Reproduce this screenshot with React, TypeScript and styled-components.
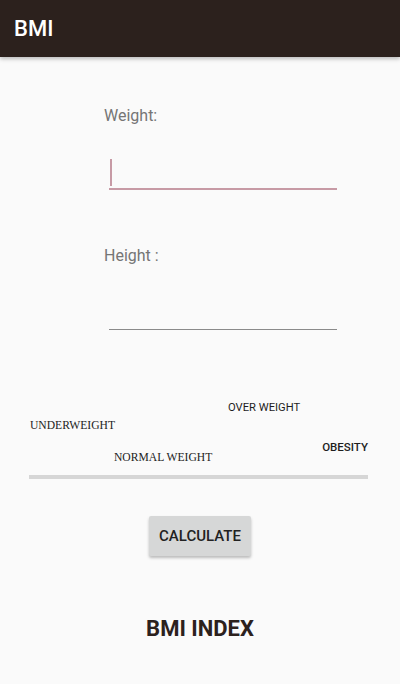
import React from "react";
import styled, { createGlobalStyle } from "styled-components";

const Global = createGlobalStyle`
  html, body { margin: 0; padding: 0; background: #fafafa; }
  body { font-family: Roboto, "Liberation Sans", sans-serif; }
`;

const Page = styled.div`
  width: 400px;
  min-height: 684px;
  background: #fafafa;
  display: flex;
  flex-direction: column;
`;

const AppBar = styled.header`
  height: 57px;
  background: #2c211d;
  display: flex;
  align-items: center;
  padding-left: 14px;
  box-shadow: 0 2px 4px rgba(0, 0, 0, 0.25);
  position: relative;
  z-index: 1;
`;

const Title = styled.h1`
  margin: 0;
  color: #ffffff;
  font: 500 22px Roboto, sans-serif;
`;

const Form = styled.section`
  display: flex;
  flex-direction: column;
  padding-left: 104px;
`;

const Label = styled.label<{ $top: number }>`
  margin-top: ${(p) => p.$top}px;
  font: 400 16px/19px Roboto, sans-serif;
  color: #757575;
`;

const Field = styled.div<{ $focused?: boolean; $top: number }>`
  margin: ${(p) => p.$top}px 0 0 5px;
  width: 228px;
  height: 38px;
  display: flex;
  align-items: flex-end;
  border-bottom: ${(p) => (p.$focused ? "2px solid #c79aa5" : "1px solid #8a8a8a")};
  padding-bottom: ${(p) => (p.$focused ? 0 : 1)}px;
`;

const Caret = styled.span`
  width: 2px;
  height: 27px;
  margin: 0 0 2px 1px;
  background: #c79aa5;
`;

const Scale = styled.section`
  display: flex;
  flex-direction: column;
  margin: 71px 32px 0 29px;
`;

const Row = styled.div`
  display: flex;
  align-items: flex-start;
`;

const SansTag = styled.span<{ $left?: number; $bold?: boolean; $top?: number }>`
  margin-left: ${(p) => (p.$left !== undefined ? `${p.$left}px` : "auto")};
  margin-top: ${(p) => p.$top || 0}px;
  font: ${(p) => (p.$bold ? 500 : 400)} ${(p) => (p.$bold ? 11.5 : 11.2)}px/13px Roboto, sans-serif;
  color: #1e1e1e;
`;

const SerifTag = styled.span<{ $left: number; $top?: number }>`
  margin-left: ${(p) => p.$left}px;
  margin-top: ${(p) => p.$top || 0}px;
  font: 400 11.6px/13px "Liberation Serif", serif;
  color: #222222;
`;

const Bar = styled.div`
  height: 4px;
  margin-top: 11px;
  background: #d6d6d6;
`;

const Button = styled.button`
  align-self: center;
  margin-top: 37px;
  height: 40px;
  padding: 0 10.5px;
  border: none;
  border-radius: 2px;
  background: #d6d7d7;
  box-shadow: 0 2px 3px rgba(0, 0, 0, 0.25);
  font: 500 15px Roboto, sans-serif;
  color: #222222;
`;

const Result = styled.h2`
  margin: 60px 0 0;
  text-align: center;
  font: 700 22px Roboto, sans-serif;
  color: #2c211d;
`;

export default function App() {
  return (
    <Page>
      <Global />
      <AppBar>
        <Title>BMI</Title>
      </AppBar>
      <Form>
        <Label $top={49}>Weight:</Label>
        <Field $focused $top={25}>
          <Caret />
        </Field>
        <Label $top={56}>Height :</Label>
        <Field $top={25} />
      </Form>
      <Scale>
        <Row>
          <SansTag $left={199}>OVER WEIGHT</SansTag>
        </Row>
        <Row>
          <SerifTag $left={1} $top={5}>UNDERWEIGHT</SerifTag>
        </Row>
        <Row>
          <SerifTag $left={85} $top={19}>NORMAL WEIGHT</SerifTag>
          <SansTag $bold $top={9}>OBESITY</SansTag>
        </Row>
        <Bar />
      </Scale>
      <Button>CALCULATE</Button>
      <Result>BMI INDEX</Result>
    </Page>
  );
}
